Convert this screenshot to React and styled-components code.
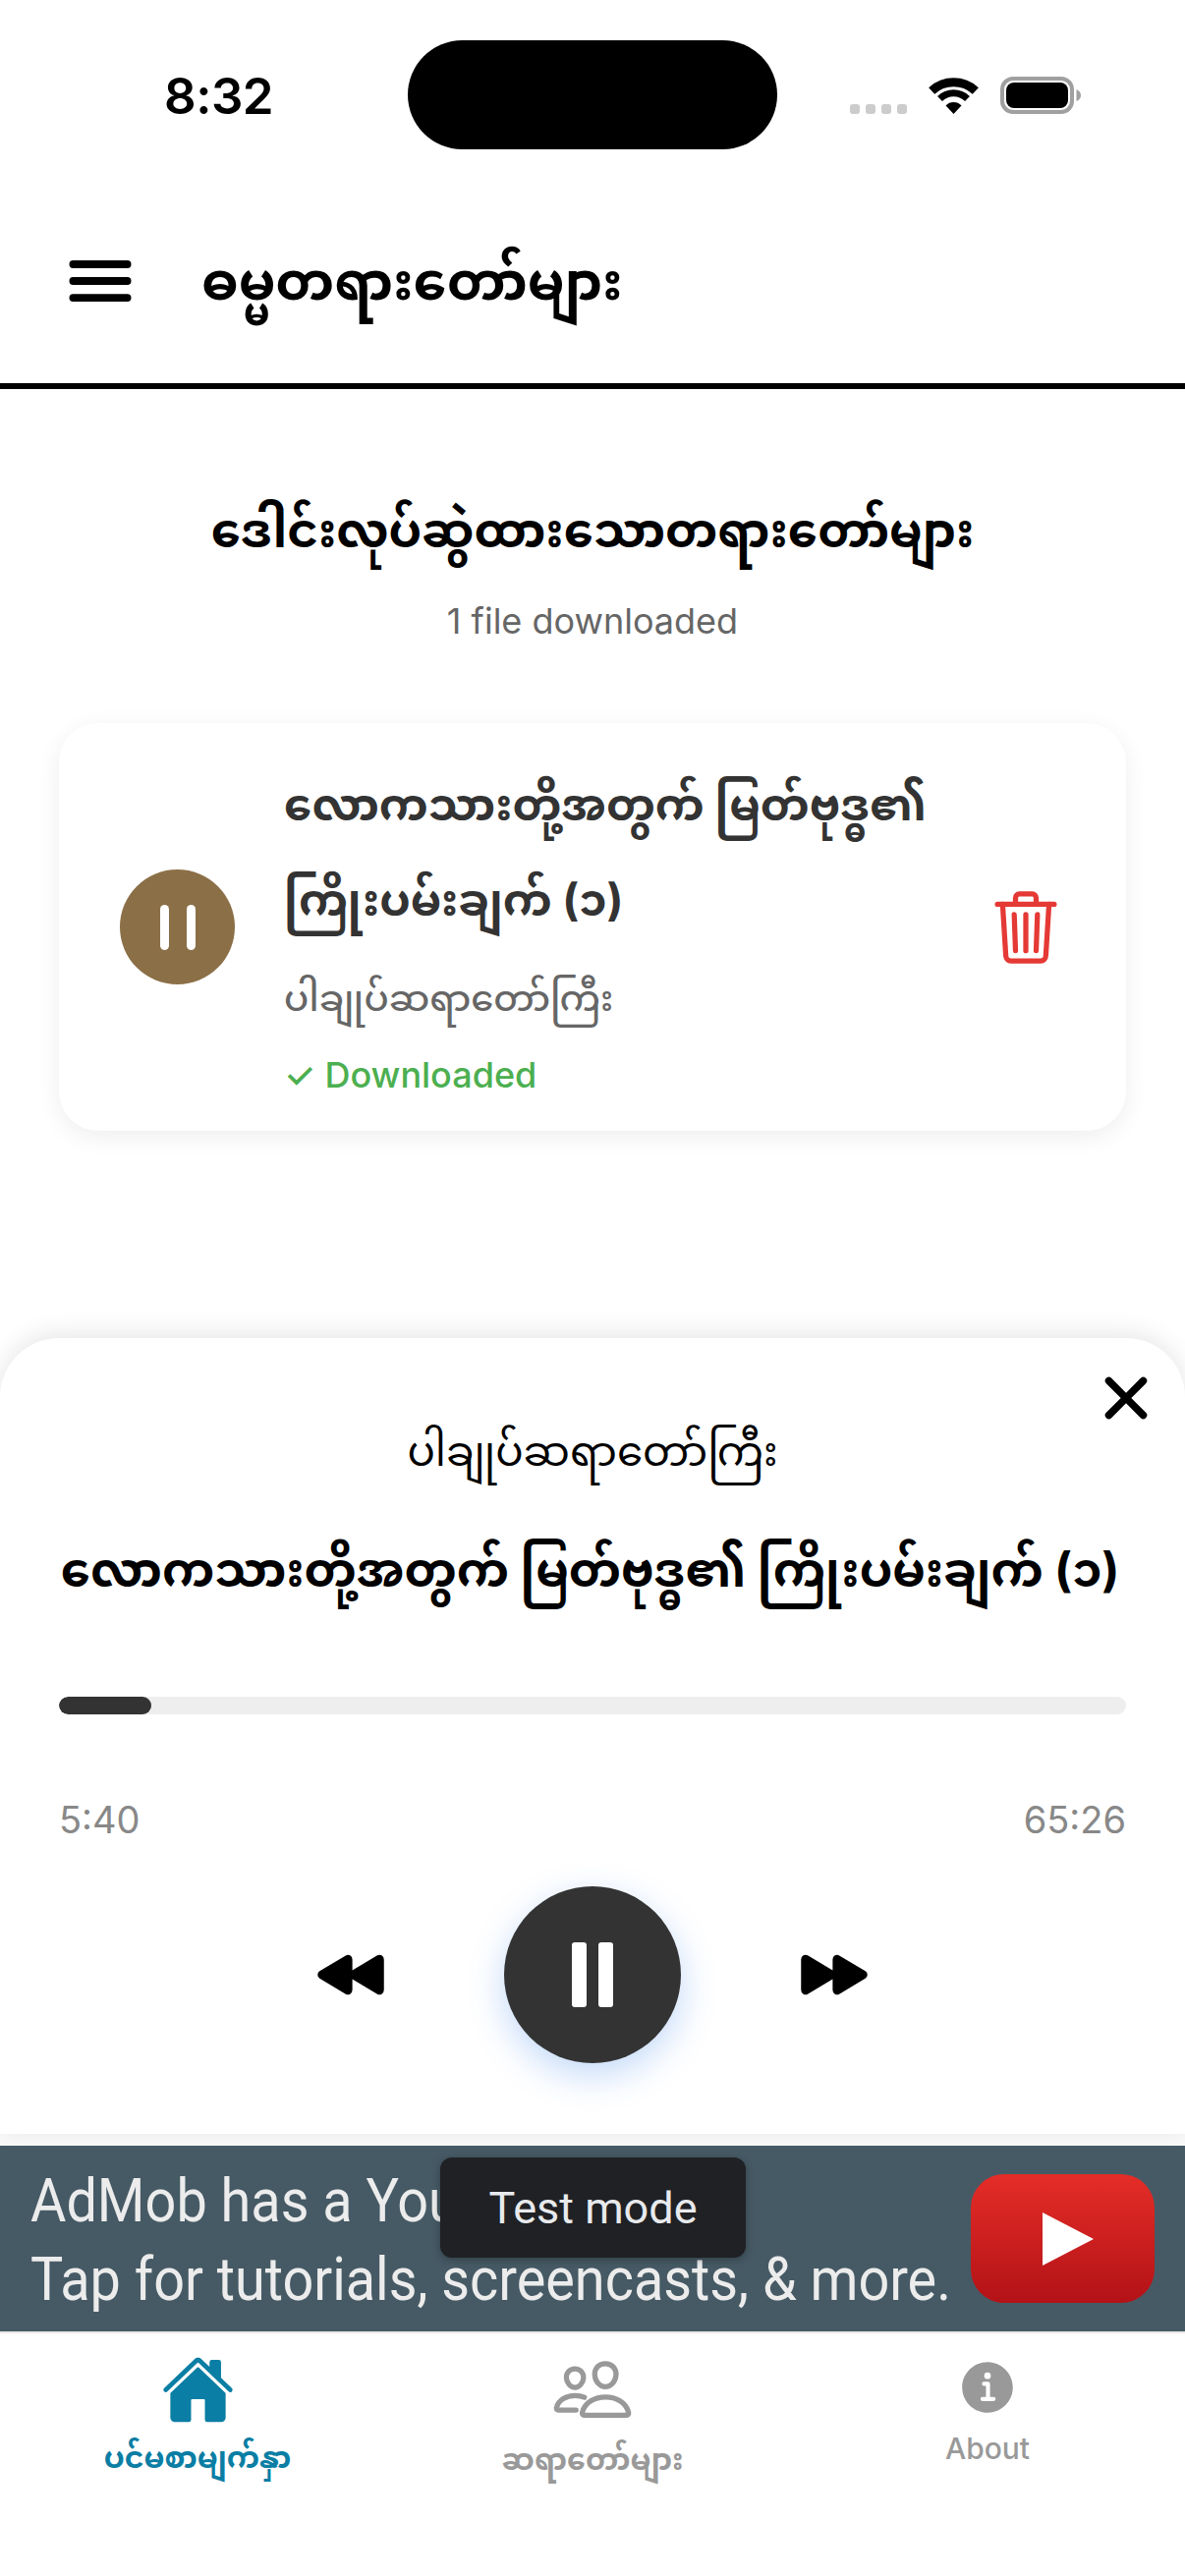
import React from "react";
import styled, { createGlobalStyle } from "styled-components";
import {
  IoHome, IoPeopleOutline, IoInformationCircle, IoTrashOutline, IoClose,
  IoPlayBack, IoPlayForward, IoPause, IoMenu,
} from "react-icons/io5";

const Global = createGlobalStyle`
  html, body { margin: 0; padding: 0; background: #fff; }
  * { box-sizing: border-box; }
  body { font-family: Inter, "Noto Sans", "Noto Sans Myanmar", Padauk, sans-serif; }
`;

const Page = styled.div`
  width: 1206px; height: 2622px; overflow: hidden; background: #fff;
  display: flex; flex-direction: column;
`;

const StatusBar = styled.div`
  height: 165px; padding-top: 41px; display: flex; align-items: flex-start; flex: none;
`;
const Time = styled.div`
  width: 415px; padding: 26px 0 0 167px; font-size: 51px; line-height: 62px; font-weight: 600; color: #000;
  letter-spacing: -0.5px;
`;
const Island = styled.div`
  width: 376px; height: 111px; border-radius: 56px; background: #000;
`;
const StatusIcons = styled.div`
  margin: 37px 0 0 74px; display: flex; align-items: flex-end; gap: 22px; height: 38px;
`;
const Dots = styled.div`
  display: flex; gap: 6px;
`;
const Dot = styled.span`
  width: 10px; height: 10px; border-radius: 3px; background: #ccc;
`;

const Header = styled.header`
  height: 231px; flex: none; border-bottom: 6px solid #000; display: flex; align-items: center;
  padding: 17px 0 0 60px; gap: 61px;
  svg { display: block; color: #000; }
`;
const HeaderTitle = styled.h1`
  margin: 0; font-size: 54px; line-height: 80px; font-weight: 700; color: #000;
`;

const Content = styled.main`
  flex: 1; min-height: 0; padding: 0 60px; display: flex; flex-direction: column;
`;
const SectionTitle = styled.h2`
  margin: 100px 0 0; text-align: center; font-size: 48px; line-height: 88px; font-weight: 700; color: #000;
`;
const SectionSub = styled.p`
  margin: 26px 0 0; text-align: center; font-size: 36px; line-height: 44px; color: #666;
`;
const Card = styled.article`
  margin-top: 82px; height: 415px; flex: none; border-radius: 40px; background: #fff;
  box-shadow: 0 6px 24px rgba(0,0,0,.07);
  display: flex; align-items: center; padding: 0 60px 0 62px;
`;
const RoundPlay = styled.div`
  width: 117px; height: 117px; border-radius: 50%; background: #8b6f47; flex: none;
  display: flex; align-items: center; justify-content: center; margin-right: 50px;
  svg { display: block; }
`;
const CardBody = styled.div`
  flex: 1; min-width: 0; display: flex; flex-direction: column;
`;
const CardTitle = styled.div`
  font-size: 45px; line-height: 97px; font-weight: 700; color: #333; width: 680px;
`;
const CardAuthor = styled.div`
  font-size: 37px; line-height: 70px; margin-top: 17px; color: #666; font-weight: 500;
`;
const Downloaded = styled.div`
  font-size: 36px; line-height: 46px; margin-top: 20px; color: #4caf50; font-weight: 500;
`;
const Trash = styled.div`
  color: #e53935; flex: none; svg { display: block; }
`;

const Sheet = styled.section`
  height: 810px; border-radius: 60px 60px 0 0; background: #fff; position: relative; flex: none;
  box-shadow: 0 -4px 26px rgba(0,0,0,.1); padding: 0 60px;
  display: flex; flex-direction: column;
`;
const Close = styled.div`
  position: absolute; top: 21px; right: 20px; color: #000; svg { display: block; }
`;
const SheetAuthor = styled.div`
  margin-top: 75px; text-align: center; font-size: 42px; line-height: 80px; color: #000;
`;
const SheetTitle = styled.div`
  margin-top: 41px; padding-right: 5px; text-align: center; font-size: 48px; line-height: 80px; font-weight: 700; color: #000; white-space: nowrap;
`;
const Track = styled.div`
  margin-top: 89px; height: 18px; border-radius: 9px; background: #eee; overflow: hidden; flex: none;
`;
const Fill = styled.div`
  height: 100%; background: #333; border-radius: 9px;
`;
const Times = styled.div`
  margin-top: 85px; display: flex; justify-content: space-between; font-size: 38px; line-height: 44px; color: #888;
`;
const Controls = styled.div`
  margin-top: 46px; display: flex; align-items: center; justify-content: center; gap: 120px; color: #000;
  svg { display: block; }
`;
const MainButton = styled.div`
  width: 180px; height: 180px; border-radius: 50%; background: #333; color: #fff;
  display: flex; align-items: center; justify-content: center;
  box-shadow: 0 12px 36px rgba(40,120,230,.28);
`;

const Strip = styled.div`
  height: 12px; background: #fafafa; flex: none;
`;
const Ad = styled.div`
  height: 189px; background: #465a65; flex: none; position: relative; display: flex; align-items: center;
  padding: 0 0 0 31px; font-family: Roboto, sans-serif; color: #ececec;
`;
const AdText = styled.div`
  width: 957px; flex: none; font-size: 62px; line-height: 80px; white-space: nowrap; padding-top: 2px;
  transform: scaleX(.9); transform-origin: left center;
`;
const TestBadge = styled.div`
  position: absolute; left: 448px; top: 12px; width: 311px; height: 102px; border-radius: 12px;
  background: #202124; color: #e8eaed; font-size: 45px; display: flex; align-items: center; justify-content: center;
  box-shadow: 0 2px 8px rgba(0,0,0,.3);
`;
const YouTube = styled.div`
  width: 187px; height: 131px; border-radius: 34px; flex: none;
  background: linear-gradient(180deg, #e52d27, #b31217);
  display: flex; align-items: center; justify-content: center;
  svg { display: block; margin-left: 10px; }
`;

const Tabs = styled.nav`
  flex: none; height: 249px; display: grid; grid-template-columns: repeat(3, 1fr); background: #fff;
  border-top: 2px solid #e8e8e8;
`;
const Tab = styled.div`
  display: flex; flex-direction: column; align-items: center; padding-top: ${(p) => p.$top}px;
  color: ${(p) => (p.$active ? "#0a7ea4" : "#999")};
  svg { display: block; }
`;
const TabLabel = styled.div`
  font-size: 30px; line-height: 50px; font-weight: ${(p) => p.$weight || 700}; margin-top: ${(p) => p.$gap || 4}px;
`;

const Wifi = () => (
  <svg width="51" height="38" viewBox="0 0 51 38" fill="none" stroke="#000">
    <path d="M25.5 38 L17.5 29.5 A11 11 0 0 1 33.5 29.5 Z" fill="#000" stroke="none" />
    <path d="M11.5 22.5 A20 20 0 0 1 39.5 22.5" strokeWidth="7" />
    <path d="M3.2 14.5 A33 33 0 0 1 47.8 14.5" strokeWidth="9" />
  </svg>
);
const Battery = () => (
  <svg width="82" height="38" viewBox="0 0 82 38">
    <rect x="2" y="2" width="71" height="34" rx="11" fill="none" stroke="#a0a0a0" strokeWidth="4" />
    <rect x="6" y="6" width="63" height="26" rx="8" fill="#000" />
    <path d="M77.5 13 Q82 15 82 19 Q82 23 77.5 25 Z" fill="#a0a0a0" />
  </svg>
);
const ThinPause = () => (
  <svg width="36" height="46" viewBox="0 0 36 46" fill="#fff">
    <rect x="0" y="0" width="9" height="46" rx="4.5" />
    <rect x="27" y="0" width="9" height="46" rx="4.5" />
  </svg>
);
const YtPlay = () => (
  <svg width="52" height="54" viewBox="0 0 52 54">
    <path d="M0 0 L52 27 L0 54 Z" fill="#fff" />
  </svg>
);

export default function App() {
  return (
    <Page>
      <Global />
      <StatusBar>
        <Time>8:32</Time>
        <Island />
        <StatusIcons>
          <Dots><Dot /><Dot /><Dot /><Dot /></Dots>
          <Wifi />
          <Battery />
        </StatusIcons>
      </StatusBar>
      <Header>
        <IoMenu size={84} />
        <HeaderTitle>ဓမ္မတရားတော်များ</HeaderTitle>
      </Header>
      <Content>
        <SectionTitle>ဒေါင်းလုပ်ဆွဲထားသောတရားတော်များ</SectionTitle>
        <SectionSub>1 file downloaded</SectionSub>
        <Card>
          <RoundPlay><ThinPause /></RoundPlay>
          <CardBody>
            <CardTitle>လောကသားတို့အတွက် မြတ်ဗုဒ္ဓ၏ ကြိုးပမ်းချက် (၁)</CardTitle>
            <CardAuthor>ပါချုပ်ဆရာတော်ကြီး</CardAuthor>
            <Downloaded>✓ Downloaded</Downloaded>
          </CardBody>
          <Trash><IoTrashOutline size={84} /></Trash>
        </Card>
      </Content>
      <Sheet>
        <Close><IoClose size={80} /></Close>
        <SheetAuthor>ပါချုပ်ဆရာတော်ကြီး</SheetAuthor>
        <SheetTitle>လောကသားတို့အတွက် မြတ်ဗုဒ္ဓ၏ ကြိုးပမ်းချက် (၁)</SheetTitle>
        <Track><Fill style={{ width: `${(340 / 3926) * 100}%` }} /></Track>
        <Times><span>5:40</span><span>65:26</span></Times>
        <Controls>
          <IoPlayBack size={72} />
          <MainButton><IoPause size={96} /></MainButton>
          <IoPlayForward size={72} />
        </Controls>
      </Sheet>
      <Strip />
      <Ad>
        <AdText>AdMob has a YouTube<br />Tap for tutorials, screencasts, &amp; more.</AdText>
        <YouTube><YtPlay /></YouTube>
        <TestBadge>Test mode</TestBadge>
      </Ad>
      <Tabs>
        <Tab $active $top={20}>
          <IoHome size={75} />
          <TabLabel $gap={6}>ပင်မစာမျက်နှာ</TabLabel>
        </Tab>
        <Tab $top={15}>
          <IoPeopleOutline size={84} />
          <TabLabel>ဆရာတော်များ</TabLabel>
        </Tab>
        <Tab $top={22}>
          <IoInformationCircle size={66} />
          <TabLabel $weight={500}>About</TabLabel>
        </Tab>
      </Tabs>
    </Page>
  );
}
